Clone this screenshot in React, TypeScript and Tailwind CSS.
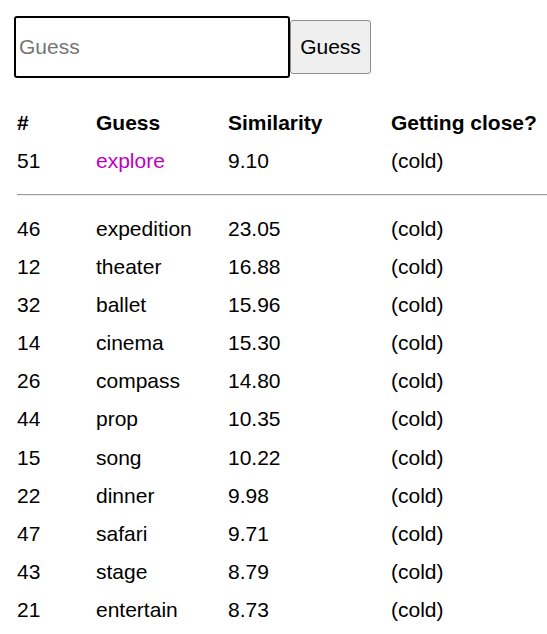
const rows = [
  ["46", "expedition", "23.05"],
  ["12", "theater", "16.88"],
  ["32", "ballet", "15.96"],
  ["14", "cinema", "15.30"],
  ["26", "compass", "14.80"],
  ["44", "prop", "10.35"],
  ["15", "song", "10.22"],
  ["22", "dinner", "9.98"],
  ["47", "safari", "9.71"],
  ["43", "stage", "8.79"],
  ["21", "entertain", "8.73"],
];

function Row({ n, word, sim, color }: { n: string; word: string; sim: string; color?: string }) {
  return (
    <div className="grid grid-cols-[79px_132px_163px_1fr] h-[38.2px] items-center">
      <div>{n}</div>
      <div className={color}>{word}</div>
      <div>{sim}</div>
      <div>(cold)</div>
    </div>
  );
}

export default function App() {
  return (
    <main className="min-h-screen bg-white text-black text-[21px] font-['Liberation_Sans',Arial,sans-serif] overflow-hidden">
      <div className="pl-[14px] pt-[16px] flex items-start">
        <input
          placeholder="Guess"
          className="w-[276px] h-[62px] border-2 border-black rounded-[3px] pl-[3px] text-[21px] placeholder:text-[#757575] outline-none"
        />
        <button className="mt-[4px] w-[81px] h-[54px] bg-[#efefef] border border-[#8f8f8f] rounded-[3px] text-[21px]">
          Guess
        </button>
      </div>

      <div className="pl-[17px] mt-[26px]">
        <div className="grid grid-cols-[79px_132px_163px_1fr] h-[38px] items-center font-bold">
          <div>#</div>
          <div>Guess</div>
          <div>Similarity</div>
          <div>Getting close?</div>
        </div>
        <Row n="51" word="explore" sim="9.10" color="text-[#c000c0]" />
        <div className="mt-[14px] mb-[13px] border-t border-t-[#9a9a9a] border-b border-b-[#eeeeee]" />
        {rows.map(([n, word, sim]) => (
          <Row key={n} n={n} word={word} sim={sim} />
        ))}
      </div>
    </main>
  );
}
